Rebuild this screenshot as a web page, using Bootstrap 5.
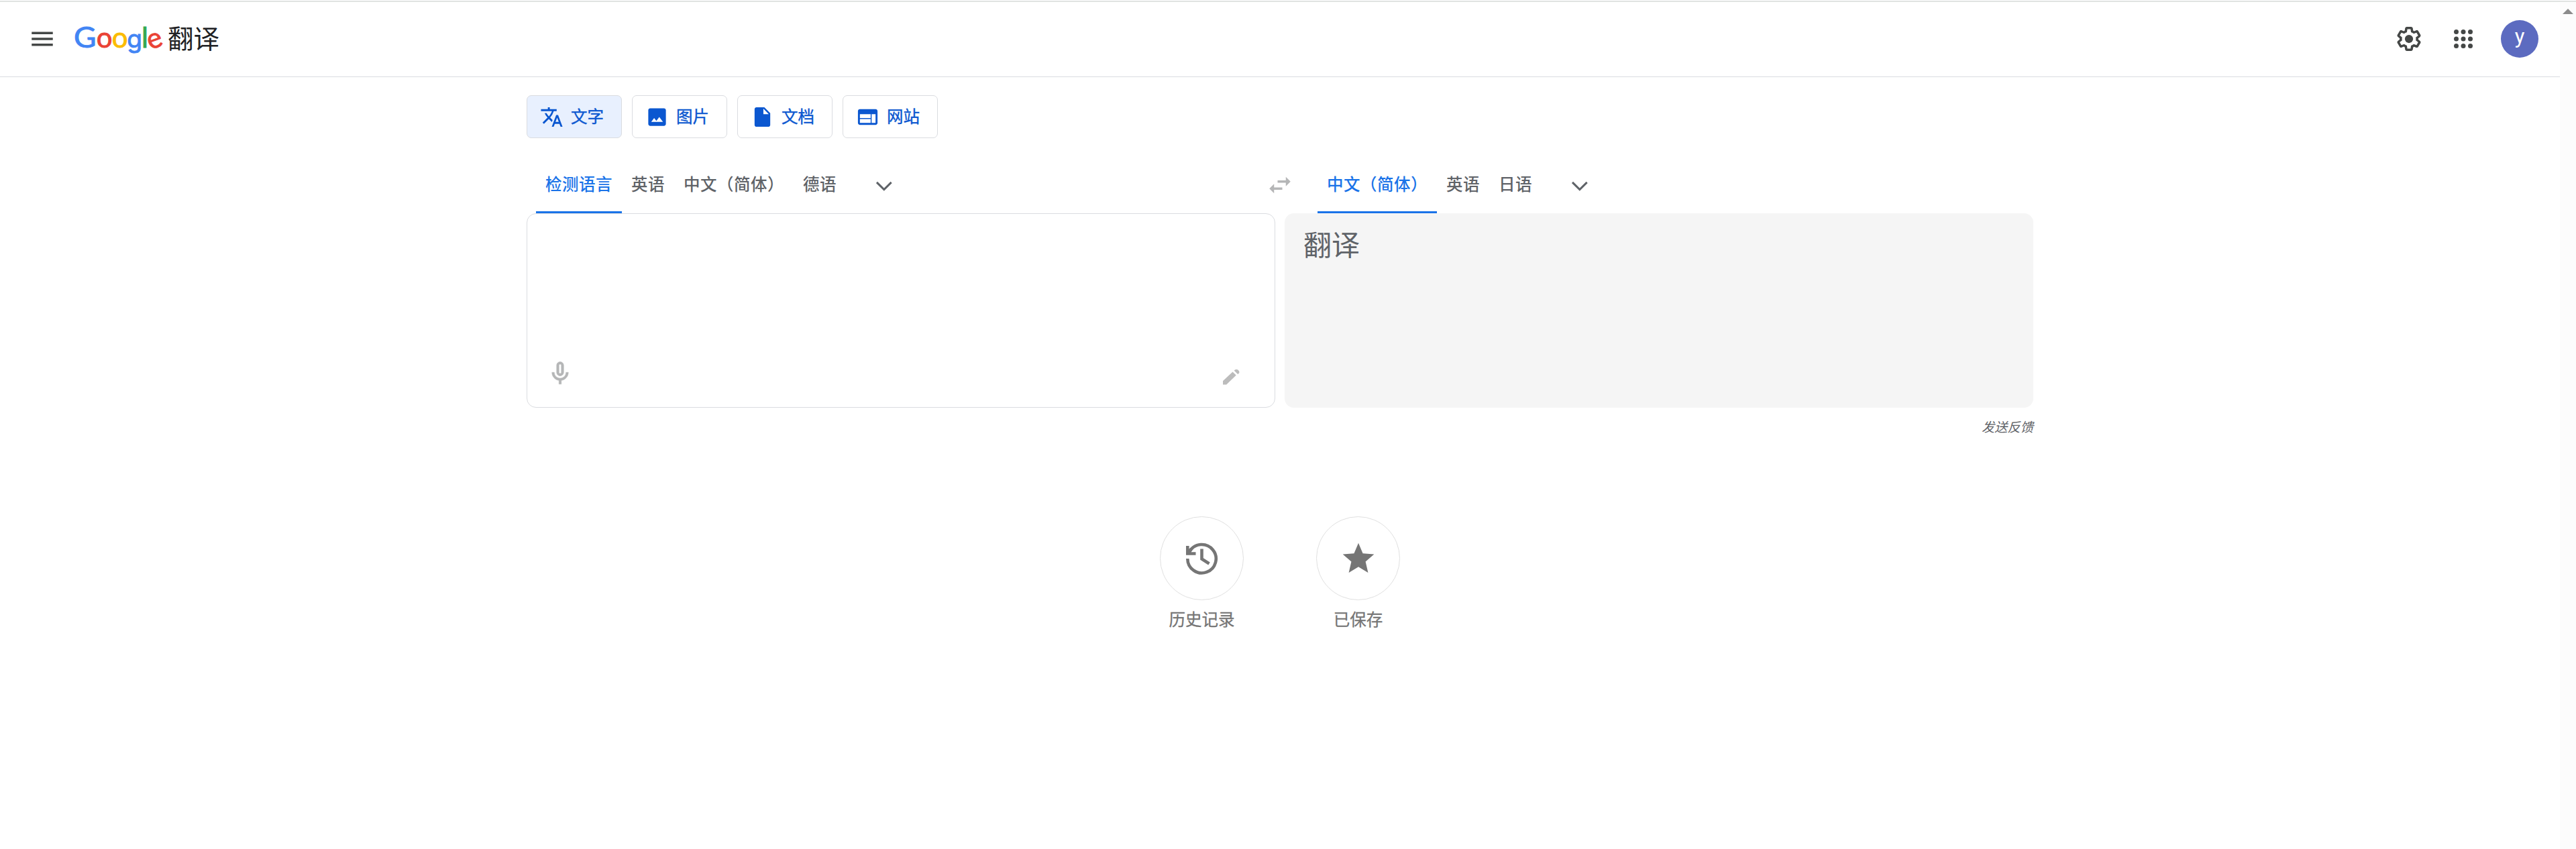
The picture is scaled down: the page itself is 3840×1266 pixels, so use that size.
<!DOCTYPE html>
<html lang="zh-CN">
<head>
<meta charset="utf-8">
<title>Google 翻译</title>
<link href="https://cdn.jsdelivr.net/npm/bootstrap@5.3.0/dist/css/bootstrap.min.css" rel="stylesheet">
<style>
html{overflow:hidden}
body{font-family:Roboto,"Noto Sans CJK SC",sans-serif;font-size:24.5px;line-height:35px;color:#5f6368;height:1266px;overflow:hidden;background:#fff}
svg{display:block;flex:none}
.top-rule{height:2px;margin-top:1px;background:#e0e3e1}
.gt-main{width:3816px}
.gt-scroll{width:24px;background:#fcfcfc;padding-top:10px}
.gt-head{height:112px;border-bottom:1px solid #dadce0;padding:0 32px 2px 42px}
.brand-cn{font-size:38.5px;line-height:56px;color:#202124;font-family:"Noto Sans CJK SC",sans-serif;margin:0 0 5px -18px}
.apps-icon{margin-left:39px}
.avatar{width:56px;height:56px;margin-left:35px;background:#5c6bc0;color:#fff;font-size:31px;line-height:49px}
.gt-body{width:2246px;margin-left:785px;padding-top:27px}
.modes{gap:14.75px}
.mode-btn{width:142.25px;height:64px;border:1px solid #dadce0;border-radius:7px;padding:0 0 0 19px;gap:11px;color:#0b57d0;font-size:24.5px;line-height:35px;background:#fff;-webkit-text-stroke:.4px currentColor}
.mode-btn.on{background:#e8f0fe}
.langs{height:112px;padding-left:14px}
.langs .lang{padding:52px 14px 0;height:112px;font-weight:500;letter-spacing:.5px;white-space:nowrap;border-bottom:3px solid transparent}
.langs .lang.on{color:#1a73e8;border-color:#1a73e8}
.more{margin:50px 0 0 36px}
.left-col{width:1088px}
.swap-cell{width:42px;padding-top:49px}
.right-col{margin-left:35px}
.panes{gap:14px}
.pane{width:1116px;height:290px;border-radius:14px}
.pane-src{border:1px solid #dadce0;padding:0 52px 29px 28px}
.pane-dst{background:#f5f5f5;padding:21px 28px;font-size:42px;line-height:56px}
.feedback{font-size:19.25px;line-height:28px;font-style:italic;margin-top:16px}
.shortcuts{margin-top:118px}
.shortcut{width:233px;color:#757575}
.shortcut div+div{margin-top:12px;-webkit-text-stroke:.3px currentColor}
.disc{width:125px;height:125px;border:1px solid #e0e0e0}
</style>
<script src="https://cdn.jsdelivr.net/npm/bootstrap@5.3.0/dist/js/bootstrap.bundle.min.js"></script>
</head>
<body>
<div class="top-rule"></div>
<div class="d-flex h-100">
<div class="gt-main">
  <header class="gt-head d-flex align-items-center">
    <svg width="42" height="42" viewBox="0 0 24 24" fill="#444746"><path d="M3 18h18v-2H3v2zm0-5h18v-2H3v2zm0-7v2h18V6H3z"/></svg>
    <svg class="ms-4" width="160" height="76" viewBox="0 -10 160 76" font-family="Lato,sans-serif" font-size="42" stroke-width=".9"><text x="2" y="41.300" fill="#4285f4" stroke="#4285f4" textLength="33.500" lengthAdjust="spacingAndGlyphs">G</text><text x="35.700" y="41.300" fill="#ea4335" stroke="#ea4335">o</text><text x="58.700" y="41.300" fill="#fbbc04" stroke="#fbbc04">o</text><text x="81.200" y="41.300" font-family="Inter,sans-serif" font-size="37" fill="#4285f4" stroke="#4285f4">g</text><text x="103" y="41.300" fill="#34a853" stroke="#34a853">l</text><text x="112" y="41.300" fill="#ea4335" stroke="#ea4335" transform="rotate(-20 123 31.500)">e</text></svg>
    <span class="brand-cn">翻译</span>
    <div class="ms-auto d-flex align-items-center">
      <svg width="42" height="42" viewBox="0 0 24 24" fill="#444746"><path d="M13.85 22.25h-3.7c-.74 0-1.36-.54-1.45-1.27l-.27-1.89c-.27-.14-.53-.29-.79-.46l-1.8.72c-.7.26-1.47-.03-1.81-.65L2.2 15.53c-.35-.66-.2-1.44.36-1.88l1.53-1.19c-.01-.15-.02-.3-.02-.46 0-.15.01-.31.02-.46l-1.52-1.19c-.59-.45-.74-1.26-.37-1.88l1.85-3.19c.34-.62 1.11-.9 1.79-.63l1.81.73c.26-.17.52-.32.78-.46l.27-1.91c.09-.7.71-1.25 1.44-1.25h3.7c.74 0 1.36.54 1.45 1.27l.27 1.89c.27.14.53.29.79.46l1.8-.72c.71-.26 1.48.03 1.82.65l1.84 3.18c.36.66.2 1.44-.36 1.88l-1.52 1.19c.01.15.02.3.02.46s-.01.31-.02.46l1.52 1.19c.56.45.72 1.23.37 1.86l-1.86 3.22c-.34.62-1.11.9-1.8.63l-1.8-.72c-.26.17-.52.32-.78.46l-.27 1.91c-.1.68-.72 1.22-1.46 1.22zm-3.23-2h2.76l.37-2.55.53-.22c.44-.18.88-.44 1.34-.78l.45-.34 2.38.96 1.38-2.4-2.03-1.58.07-.56c.03-.26.06-.51.06-.78s-.03-.53-.06-.78l-.07-.56 2.03-1.58-1.39-2.4-2.39.96-.45-.35c-.42-.32-.87-.58-1.33-.77l-.52-.22-.37-2.55h-2.76l-.37 2.55-.53.21c-.44.19-.88.44-1.34.79l-.45.33-2.38-.95-1.39 2.39 2.03 1.58-.07.56a7 7 0 0 0-.06.79c0 .26.02.53.06.78l.07.56-2.03 1.58 1.38 2.4 2.39-.96.45.35c.43.33.86.58 1.33.77l.53.22.38 2.55z"/><circle cx="12" cy="12" r="3.5"/></svg>
      <svg class="apps-icon" width="42" height="42" viewBox="0 0 24 24" fill="#444746"><circle cx="6" cy="6" r="2"/><circle cx="12" cy="6" r="2"/><circle cx="18" cy="6" r="2"/><circle cx="6" cy="12" r="2"/><circle cx="12" cy="12" r="2"/><circle cx="18" cy="12" r="2"/><circle cx="6" cy="18" r="2"/><circle cx="12" cy="18" r="2"/><circle cx="18" cy="18" r="2"/></svg>
      <div class="avatar rounded-circle text-center">y</div>
    </div>
  </header>
  <main class="gt-body">
    <div class="modes d-flex">
      <button class="mode-btn on d-flex align-items-center"><svg width="35" height="35" viewBox="0 0 24 24" fill="currentColor"><path d="M12.870 15.070l-2.540-2.510.030-.030A17.520 17.520 0 0 0 14.070 6H17V4h-7V2H8v2H1v1.990h11.170C11.500 7.920 10.440 9.750 9 11.350 8.070 10.320 7.300 9.190 6.690 8h-2c.730 1.630 1.730 3.170 2.980 4.560l-5.090 5.020L4 19l5-5 3.110 3.110.760-2.040zM18.500 10h-2L12 22h2l1.120-3h4.750L21 22h2l-4.500-12zm-2.620 7l1.620-4.330L19.120 17h-3.240z"/></svg>文字</button>
      <button class="mode-btn d-flex align-items-center"><svg width="35" height="35" viewBox="0 0 24 24" fill="currentColor"><path d="M21 19V5c0-1.100-.9-2-2-2H5c-1.100 0-2 .9-2 2v14c0 1.100.9 2 2 2h14c1.100 0 2-.9 2-2zM6 17l3-4 2.250 3 3-4L18 17z"/></svg>图片</button>
      <button class="mode-btn d-flex align-items-center"><svg width="35" height="35" viewBox="0 0 24 24" fill="currentColor"><path fill-rule="evenodd" d="M6 2c-1.100 0-2 .9-2 2v16c0 1.100.9 2 2 2h12c1.100 0 2-.9 2-2V8l-6-6H6zm7 7V3.500L18.500 9H13z"/></svg>文档</button>
      <button class="mode-btn d-flex align-items-center"><svg width="35" height="35" viewBox="0 0 24 24" fill="currentColor"><path d="M20 4H4c-1.100 0-2 .9-2 2v12c0 1.100.9 2 2 2h16c1.100 0 2-.9 2-2V6c0-1.100-.9-2-2-2zm-5 14H4v-4h11v4zm0-5H4V9h11v4zm5 5h-4V9h4v9z"/></svg>网站</button>
    </div>
    <div class="langs d-flex">
      <div class="left-col d-flex">
        <div class="lang on">检测语言</div><div class="lang">英语</div><div class="lang">中文（简体）</div><div class="lang">德语</div>
        <svg class="more" width="42" height="42" viewBox="0 0 24 24" fill="#5f6368"><path d="M5.410 7.590L4 9l8 8 8-8-1.410-1.410L12 14.170z" transform="translate(1.700 2) scale(.85)"/></svg>
      </div>
      <div class="swap-cell"><svg width="42" height="42" viewBox="0 0 24 24" fill="#b5b6b7"><path d="M6.990 11L3 15l3.990 4v-3H14v-2H6.990v-3zM21 9l-3.990-4v3H10v2h7.010v3L21 9z"/></svg></div>
      <div class="right-col d-flex">
        <div class="lang on">中文（简体）</div><div class="lang">英语</div><div class="lang">日语</div>
        <svg class="more" width="42" height="42" viewBox="0 0 24 24" fill="#5f6368"><path d="M5.410 7.590L4 9l8 8 8-8-1.410-1.410L12 14.170z" transform="translate(1.700 2) scale(.85)"/></svg>
      </div>
    </div>
    <div class="panes d-flex">
      <div class="pane pane-src d-flex align-items-end justify-content-between">
        <svg width="42" height="42" viewBox="0 0 24 24" fill="#b5b6b7"><path stroke="#b5b6b7" stroke-width=".3" d="M12 14c1.660 0 3-1.340 3-3V5c0-1.660-1.340-3-3-3S9 3.340 9 5v6c0 1.660 1.340 3 3 3zm-1-9c0-.55.450-1 1-1s1 .45 1 1v6c0 .55-.45 1-1 1s-1-.45-1-1V5zm6 6c0 2.760-2.240 5-5 5s-5-2.240-5-5H5c0 3.530 2.610 6.430 6 6.920V21h2v-3.080c3.390-.49 6-3.390 6-6.920h-2z"/></svg>
        <svg class="mb-1" width="25" height="24" viewBox="0 0 25 24" fill="#bcbcbc"><path d="M0 23.500V18L14.500 4.500l5.200 5L5.200 23.500zM16.600 2.600Q19-.2 22 1.200q3.500 2.200 2 5.200l-1.900 1.700z"/></svg>
      </div>
      <div class="pane pane-dst">翻译</div>
    </div>
    <div class="feedback text-end">发送反馈</div>
    <div class="shortcuts d-flex justify-content-center">
      <div class="shortcut d-flex flex-column align-items-center">
        <div class="disc rounded-circle d-flex align-items-center justify-content-center"><svg width="48" height="48" viewBox="0 0 48 48" fill="none" stroke="#757575" stroke-width="4.600"><path d="M2.300 24A21.200 21.200 0 1 0 5.200 13.500M2.300 5v11.500H14.500M23.500 9.500v15l11 7"/><path d="M3 16L8 9"/></svg></div>
        <div>历史记录</div>
      </div>
      <div class="shortcut d-flex flex-column align-items-center">
        <div class="disc rounded-circle d-flex align-items-center justify-content-center"><svg width="56" height="56" viewBox="0 0 24 24" fill="#757575"><path d="M12 17.270L18.180 21l-1.640-7.030L22 9.240l-7.190-.61L12 2 9.190 8.630 2 9.240l5.460 4.730L5.820 21z"/></svg></div>
        <div>已保存</div>
      </div>
    </div>
  </main>
</div>
<div class="gt-scroll"><svg class="mx-auto" width="18" height="8"><path d="M1 8L9 0l8 8z" fill="#8b8b8b"/></svg></div>
</div>
</body>
</html>
